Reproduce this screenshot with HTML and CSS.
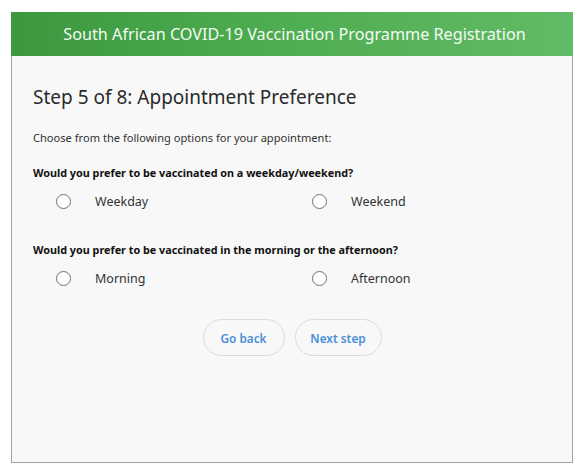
FILE: index.html
```html
<!DOCTYPE html>
<html>
<head>
<meta charset="utf-8">
<link rel="stylesheet" href="styles.css">
</head>
<body>
<div class="card">
  <div class="header">South African COVID-19 Vaccination Programme Registration</div>
  <div class="content">
    <h1 class="title">Step 5 of 8: Appointment Preference</h1>
    <p class="intro">Choose from the following options for your appointment:</p>
    <div class="question">
      <div class="q-label">Would you prefer to be vaccinated on a weekday/weekend?</div>
      <div class="options">
        <label class="option"><span class="radio"></span><span class="opt-text">Weekday</span></label>
        <label class="option"><span class="radio"></span><span class="opt-text">Weekend</span></label>
      </div>
    </div>
    <div class="question">
      <div class="q-label">Would you prefer to be vaccinated in the morning or the afternoon?</div>
      <div class="options">
        <label class="option"><span class="radio"></span><span class="opt-text">Morning</span></label>
        <label class="option"><span class="radio"></span><span class="opt-text">Afternoon</span></label>
      </div>
    </div>
    <div class="actions">
      <button class="btn">Go back</button>
      <button class="btn btn-next">Next step</button>
    </div>
  </div>
</div>
</body>
</html>
```
FILE: styles.css
```css
* { box-sizing: border-box; }
html, body { margin: 0; padding: 0; background: #ffffff; }
body {
  font-family: "Noto Sans", "Open Sans", sans-serif;
  padding: 12px 12px 12px 11px;
}
.card {
  width: 562px;
  height: 451px;
  border: 1px solid #a3a3a3;
  background: #f8f8f8;
  display: flex;
  flex-direction: column;
}
.header {
  height: 44px;
  margin: -1px -1px 0 -1px;
  background: linear-gradient(90deg, #3b983f 0%, #4fad52 50%, #62bb66 100%);
  color: #f4fbf4;
  font-size: 16.2px;
  display: flex;
  align-items: center;
  justify-content: center;
  padding-bottom: 1px;
  padding-left: 5px;
}
.content {
  padding: 0 21px;
  display: flex;
  flex-direction: column;
}
.title {
  margin: 28px 0 0 0;
  font-weight: normal;
  font-size: 19px;
  line-height: 26px;
  color: #2a2a2a;
}
.intro {
  margin: 21px 0 0 0;
  font-size: 11.1px;
  line-height: 14px;
  color: #333;
}
.question { margin-top: 21px; }
.question + .question { margin-top: 34px; }
.q-label {
  font-size: 10.8px;
  font-weight: bold;
  line-height: 14px;
  color: #111;
}
.options {
  display: grid;
  grid-template-columns: 256px 256px;
  margin-top: 13px;
  padding-left: 23px;
}
.option {
  display: flex;
  align-items: center;
  height: 16px;
}
.radio {
  width: 15px;
  height: 15px;
  border: 1.5px solid #707070;
  border-radius: 50%;
  background: #fff;
  flex: none;
}
.opt-text {
  margin-left: 24px;
  font-size: 12.5px;
  color: #333;
}
.actions {
  display: flex;
  justify-content: center;
  gap: 10px;
  margin-top: 33px;
}
.btn {
  height: 37px;
  width: 82px;
  border: 1px solid #dcdcdc;
  border-radius: 19px;
  background: #f8f8f8;
  color: #4a8fd8;
  font-family: "Noto Sans", "Open Sans", sans-serif;
  font-size: 11.8px;
  font-weight: 600;
}
.btn-next { width: 87px; }
```
